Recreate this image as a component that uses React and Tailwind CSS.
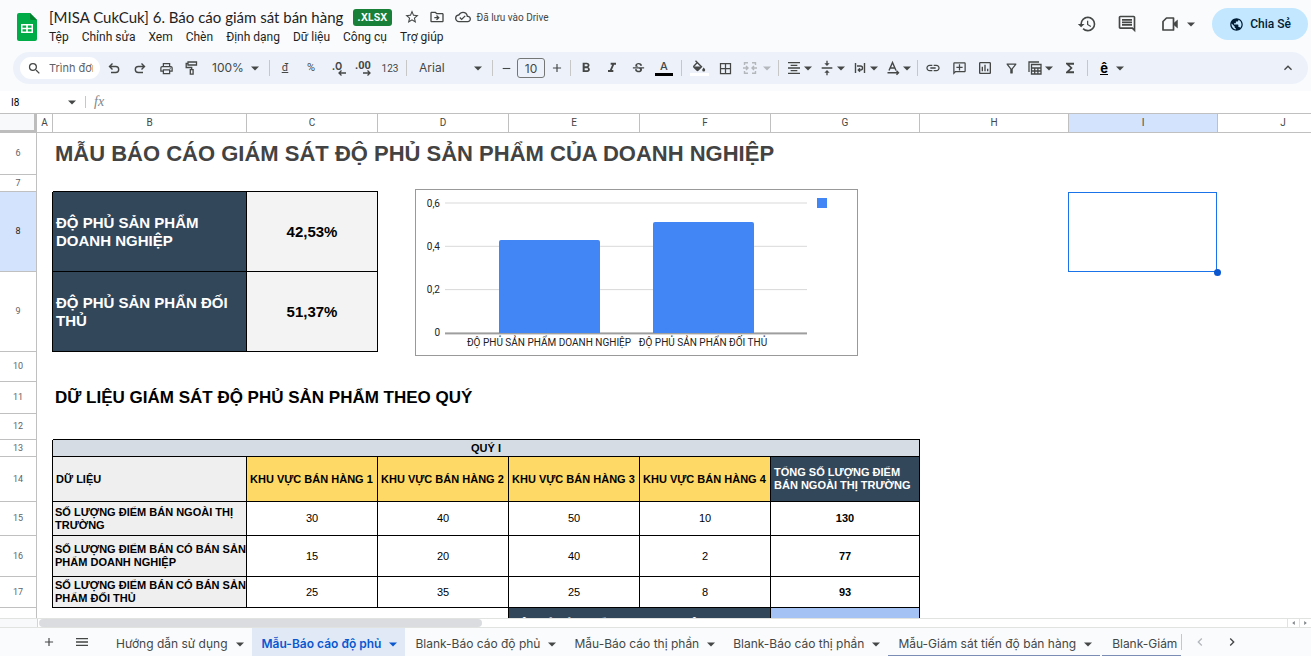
import {
  MdAdd, MdBorderAll, MdChevronLeft, MdChevronRight, MdExpandLess,
  MdFormatAlignCenter, MdFormatBold, MdFormatColorFill, MdFormatItalic, MdFunctions, MdHistory,
  MdLink, MdMenu, MdOutlineAddComment, MdOutlineCloudDone, MdOutlineDriveFileMove,
  MdOutlineFilterAlt, MdOutlineInsertChart, MdOutlineInsertComment, MdOutlinePrint, MdPublic,
  MdRemove, MdSearch, MdStarBorder, MdStrikethroughS, MdVerticalAlignCenter,
} from "react-icons/md"

const MENUS = ["Tệp", "Chỉnh sửa", "Xem", "Chèn", "Định dạng", "Dữ liệu", "Công cụ", "Trợ giúp"]

const COLUMNS = [
  { name: "A", width: "w-[16px]" },
  { name: "B", width: "w-[194px]" },
  { name: "C", width: "w-[131px]" },
  { name: "D", width: "w-[131px]" },
  { name: "E", width: "w-[131px]" },
  { name: "F", width: "w-[131px]" },
  { name: "G", width: "w-[149px]" },
  { name: "H", width: "w-[149px]" },
  { name: "I", width: "w-[149px]" },
  { name: "J", width: "w-[131px]" },
]

const AREAS = ["KHU VỰC BÁN HÀNG 1", "KHU VỰC BÁN HÀNG 2", "KHU VỰC BÁN HÀNG 3", "KHU VỰC BÁN HÀNG 4"]

const DATA = [
  { row: 15, height: "h-[34px]", label: ["SỐ LƯỢNG ĐIỂM BÁN NGOÀI THỊ", "TRƯỜNG"], values: [30, 40, 50, 10], total: 130 },
  { row: 16, height: "h-[41px]", label: ["SỐ LƯỢNG ĐIỂM BÁN CÓ BÁN SẢN", "PHẨM DOANH NGHIỆP"], values: [15, 20, 40, 2], total: 77 },
  { row: 17, height: "h-[31px]", label: ["SỐ LƯỢNG ĐIỂM BÁN CÓ BÁN SẢN", "PHẨM ĐỐI THỦ"], values: [25, 35, 25, 8], total: 93 },
]

const TABS = [
  { name: "Hướng dẫn sử dụng" },
  { name: "Mẫu-Báo cáo độ phủ", active: true },
  { name: "Blank-Báo cáo độ phủ" },
  { name: "Mẫu-Báo cáo thị phần" },
  { name: "Blank-Báo cáo thị phần" },
  { name: "Mẫu-Giám sát tiến độ bán hàng", marked: true },
  { name: "Blank-Giám", marked: true },
]

const cell = "border-r border-b border-black px-[3px]"

function Arrow() {
  return (
    <svg viewBox="0 0 12 12" className="h-3 w-3 shrink-0" fill="currentColor" aria-hidden="true">
      <path d="M2 4.500h8L6 8.500z" />
    </svg>
  )
}

function UndoIcon({ className = "" }) {
  return (
    <svg viewBox="0 0 12 12" className={`h-3 w-3 ${className}`} fill="none" stroke="currentColor" strokeWidth="1.400">
      <path d="M4.500 1.500l-3 3 3 3M1.500 4.500h6.200a3 3 0 0 1 0 6H3" />
    </svg>
  )
}

function Sep({ wide }) {
  return <span className={`h-4 w-px shrink-0 bg-[#c7c7c7] ${wide ? "mx-1" : "mx-[2px]"}`} />
}

function Tool({ label, children, className = "w-[26px]" }) {
  return (
    <button aria-label={label} title={label} className={`flex h-6 shrink-0 items-center justify-center ${className}`}>
      {children}
    </button>
  )
}

function ToolSelect({ label, value, className }) {
  return (
    <span className={`relative flex shrink-0 items-center ${className}`}>
      <select aria-label={label} defaultValue={value} className="w-full appearance-none bg-transparent text-xs outline-none">
        <option>{value}</option>
      </select>
      <span className="pointer-events-none absolute right-1.5">
        <Arrow />
      </span>
    </span>
  )
}

function Header() {
  return (
    <header className="flex h-[52px] items-start justify-between pr-[3px] pt-[7px]">
      <div className="flex">
        {/* Sheets logo */}
        <svg viewBox="0 0 20 28" className="ml-[17px] mt-1.5 h-7 w-5">
          <path d="M2 0h11l7 7v19a2 2 0 0 1-2 2H2a2 2 0 0 1-2-2V2a2 2 0 0 1 2-2z" fill="#00ac47" />
          <path d="M13 0l7 7h-5.500a1.500 1.500 0 0 1-1.500-1.500z" fill="#00832d" />
          <path d="M4 11h12v9H4zM5.500 12.500v2.200h3.700v-2.200zM10.800 12.500v2.200h3.700v-2.200zM5.500 16.300v2.200h3.700v-2.200zM10.800 16.300v2.200h3.700v-2.200z" fill="#fff" fillRule="evenodd" />
        </svg>
        <div className="ml-3">
          <div className="flex h-5 items-center">
            <h1 className="whitespace-nowrap font-[Lato,sans-serif] text-[15px] text-[#1f1f1f]">
              [MISA CukCuk] 6. Báo cáo giám sát bán hàng
            </h1>
            <span className="ml-2.5 rounded-[3px] bg-[#188038] px-1 text-[10px] font-bold leading-[17px] text-white">.XLSX</span>
            <button aria-label="Gắn dấu sao" className="ml-3"><MdStarBorder size={16} /></button>
            <button aria-label="Di chuyển" className="ml-[9px]"><MdOutlineDriveFileMove size={16} /></button>
            <MdOutlineCloudDone size={16} className="ml-2.5" />
            <span className="ml-1.5 font-[Roboto,sans-serif] text-[10px]">Đã lưu vào Drive</span>
          </div>
          <nav className="flex h-5 items-center gap-[13px] font-[Roboto,sans-serif] text-xs text-[#1f1f1f]">
            {MENUS.map((menu) => (
              <button key={menu} className="whitespace-nowrap">{menu}</button>
            ))}
          </nav>
        </div>
      </div>

      <div className="flex h-[34px] shrink-0 items-center">
        <button aria-label="Nhật ký phiên bản"><MdHistory size={20} /></button>
        <button aria-label="Nhận xét" className="ml-5"><MdOutlineInsertComment size={20} /></button>
        <button aria-label="Tham gia cuộc gọi" className="ml-6 flex items-center gap-1.5">
          <svg viewBox="0 0 18 16" className="h-4 w-[18px]" fill="none" stroke="currentColor" strokeWidth="1.700">
            <path d="M5.500 2h7v12H2V5.500z" strokeLinejoin="round" />
            <path d="M12.500 7.500l4-3.500v8l-4-3.500z" fill="currentColor" strokeWidth="0.500" />
          </svg>
          <Arrow />
        </button>
        <button className="ml-[15px] flex h-8 w-24 items-center justify-center gap-1.5 rounded-full bg-[#c2e7ff] font-[Roboto,sans-serif] text-xs font-medium text-[#001d35]">
          <MdPublic size={15} />
          Chia Sẻ
        </button>
      </div>
    </header>
  )
}

function Toolbar() {
  return (
    <div className="ml-[13px] mr-[3px] flex h-8 items-center rounded-full bg-[#edf2fa] pl-[7px] pr-3">
      <label className="mr-px flex h-[22px] w-20 shrink-0 items-center rounded-full bg-white pl-[7px] pr-[7px]">
        <MdSearch size={15} className="shrink-0" />
        <input
          type="text"
          aria-label="Trình đơn"
          placeholder="Trình đơn"
          className="ml-[7px] w-full min-w-0 text-[11px] outline-none placeholder:text-[#5f6368]"
        />
      </label>
      <Tool label="Hủy"><UndoIcon /></Tool>
      <Tool label="Làm lại"><UndoIcon className="-scale-x-100" /></Tool>
      <Tool label="In"><MdOutlinePrint size={15} /></Tool>
      <Tool label="Sao chép định dạng">
        <svg viewBox="0 0 14 14" className="h-3.5 w-3.5" fill="none" stroke="currentColor" strokeWidth="1.300">
          <path d="M3 1h8.500v3H3zM3 2.500H1.200v4h5.500v2M5.300 8.700h2.800v4.500H5.300z" />
        </svg>
      </Tool>
      <ToolSelect label="Thu phóng" value="100%" className="w-[62px] pl-[7px]" />
      <Sep />
      <Tool label="Tiền tệ"><span className="font-[Roboto,sans-serif] text-[11px] underline">đ</span></Tool>
      <Tool label="Phần trăm"><span className="font-[Roboto,sans-serif] text-[11px]">%</span></Tool>
      <Tool label="Giảm số thập phân">
        <span className="relative pb-1 text-[11px] font-semibold leading-3">
          .0
          <svg viewBox="0 0 8 6" className="absolute -right-1 bottom-0 h-1.5 w-2" fill="none" stroke="currentColor" strokeWidth="1.300">
            <path d="M8 3H1M3.500.5L1 3l2.500 2.500" />
          </svg>
        </span>
      </Tool>
      <Tool label="Tăng số thập phân">
        <span className="relative pb-1 font-[Roboto,sans-serif] text-[11px] font-bold leading-3">
          .00
          <svg viewBox="0 0 8 6" className="absolute bottom-0 right-0 h-1.5 w-2" fill="none" stroke="currentColor" strokeWidth="1.300">
            <path d="M0 3h7M4.500.5L7 3 4.500 5.500" />
          </svg>
        </span>
      </Tool>
      <Tool label="Định dạng khác" className="w-7"><span className="font-[Roboto,sans-serif] text-[10px]">123</span></Tool>
      <Sep />
      <ToolSelect label="Phông chữ" value="Arial" className="w-[81px] pl-2.5" />
      <Sep />
      <Tool label="Giảm cỡ chữ" className="w-[22px]"><MdRemove size={13} /></Tool>
      <input
        type="text"
        aria-label="Cỡ chữ"
        defaultValue="10"
        className="h-5 w-7 shrink-0 rounded-[3px] border border-[#747775] text-center text-xs outline-none"
      />
      <Tool label="Tăng cỡ chữ" className="w-[23px]"><MdAdd size={14} /></Tool>
      <Sep />
      <Tool label="Đậm"><MdFormatBold size={16} /></Tool>
      <Tool label="Nghiêng"><MdFormatItalic size={16} /></Tool>
      <Tool label="Gạch ngang"><MdStrikethroughS size={15} /></Tool>
      <Tool label="Màu văn bản">
        <span className="w-[18px] border-b-[3px] border-black text-center text-[11px] font-medium leading-[13px]">A</span>
      </Tool>
      <Sep wide />
      <Tool label="Màu nền">
        <span className="flex w-[19px] justify-center border-b-[3px] border-white">
          {/* tipped bucket without the colour strip of the stock icon */}
          <svg viewBox="0 0 14 13" className="h-[13px] w-3.5" fill="none" stroke="currentColor" strokeWidth="1.400">
            <path d="M3.500 0.800l6 6-3.300 3.300a1 1 0 0 1-1.400 0L2 7.300a1 1 0 0 1 0-1.400l3.300-3.300" />
            <path d="M2 6.500h7.200L5.500 10.200z" fill="currentColor" stroke="none" />
            <path d="M11.700 7.500s1.500 1.500 1.500 2.500a1.500 1.500 0 0 1-3 0c0-1 1.500-2.500 1.500-2.500z" fill="currentColor" stroke="none" />
          </svg>
        </span>
      </Tool>
      <Tool label="Đường viền"><MdBorderAll size={15} /></Tool>
      <Tool label="Hợp nhất ô" className="w-9 pl-1 text-[#b4b7bb]">
        <svg viewBox="0 0 14 14" className="mr-1 h-3.5 w-3.5 shrink-0" fill="none" stroke="currentColor" strokeWidth="1.400">
          <path d="M5 1.700H1.500V4M9 1.700h3.500V4M5 12.300H1.500V10M9 12.300h3.500V10M0 7h5M3 5l2 2-2 2M14 7H9M11 5L9 7l2 2" />
        </svg>
        <Arrow />
      </Tool>
      <Sep wide />
      <Tool label="Căn ngang" className="w-[33px]"><MdFormatAlignCenter size={16} /><Arrow /></Tool>
      <Tool label="Căn dọc" className="w-[33px]"><MdVerticalAlignCenter size={16} /><Arrow /></Tool>
      <Tool label="Xuống dòng" className="w-[33px]">
        <svg viewBox="0 0 16 16" className="h-4 w-4" fill="none" stroke="currentColor" strokeWidth="1.400">
          <path d="M3.500 3v10M12.500 3v10M5 6h3.500a2 2 0 0 1 0 4H6.500M8 8.300L6.300 10 8 11.700" />
        </svg>
        <Arrow />
      </Tool>
      <Tool label="Xoay văn bản" className="w-[33px]">
        <svg viewBox="0 0 16 16" className="h-4 w-4" fill="none" stroke="currentColor" strokeWidth="1.400">
          <path d="M4 10.500L7.500 2.500 11 10.500M5.200 8h4.600M2.500 12.800h11M11.500 10.800l2 2-2 2" />
        </svg>
        <Arrow />
      </Tool>
      <Sep />
      <Tool label="Chèn đường liên kết"><MdLink size={16} /></Tool>
      <Tool label="Chèn nhận xét"><MdOutlineAddComment size={15} className="-scale-x-100" /></Tool>
      <Tool label="Chèn biểu đồ"><MdOutlineInsertChart size={16} /></Tool>
      <Tool label="Tạo bộ lọc"><MdOutlineFilterAlt size={15} /></Tool>
      <Tool label="Chế độ xem bộ lọc" className="w-[33px]">
        <svg viewBox="0 0 16 16" className="h-4 w-4" fill="none" stroke="currentColor" strokeWidth="1.300">
          <path d="M12 2H2v10M4.500 4.500h9.500v9.500H4.500zM4.500 8H14M4.500 11H14M7.700 8v6M10.900 8v6" />
        </svg>
        <Arrow />
      </Tool>
      <Tool label="Hàm"><MdFunctions size={16} /></Tool>
      <Sep wide />
      <Tool label="Công cụ nhập" className="w-[42px] gap-1.5">
        <span className="border-b border-black text-[13px] font-bold leading-3 text-black">ê</span>
        <Arrow />
      </Tool>
      <button aria-label="Ẩn trình đơn" className="ml-auto"><MdExpandLess size={16} /></button>
    </div>
  )
}

function FormulaBar() {
  return (
    <div className="flex h-[23px] items-center border-b border-[#c0c0c0] bg-white">
      <input
        type="text"
        aria-label="Hộp tên"
        defaultValue="I8"
        className="ml-[11px] w-[55px] font-[Roboto,sans-serif] text-[10px] text-black outline-none"
      />
      <button aria-label="Dải ô đã đặt tên"><Arrow /></button>
      <span className="ml-[7px] h-3 w-px bg-[#c7c7c7]" />
      <label htmlFor="formula" className="ml-2 font-['Liberation_Serif',serif] text-sm italic text-[#80868b]">fx</label>
      <input id="formula" type="text" className="ml-2 min-w-0 flex-1 text-xs outline-none" />
    </div>
  )
}

function RowHead({ n, selected }) {
  return (
    <th
      scope="row"
      className={`border-b border-r border-[#c0c0c0] font-[Roboto,sans-serif] text-[9px] font-normal ${selected ? "bg-[#d3e3fd] text-[#1f1f1f]" : "text-[#5f6368]"}`}
    >
      {n}
    </th>
  )
}

function CoverageChart() {
  return (
    <svg
      viewBox="0 0 443 167"
      role="img"
      aria-label="Biểu đồ độ phủ sản phẩm"
      className="absolute left-[415px] top-[75px] h-[167px] w-[443px] bg-white font-[Roboto,sans-serif] text-[10px]"
    >
      <rect x="0.500" y="0.500" width="442" height="166" fill="none" stroke="#999" />
      {["0,6", "0,4", "0,2", "0"].map((tick, i) => (
        <g key={tick}>
          <rect x="30" y={13.5 + i * 43.3} width="362" height={i === 3 ? 2 : 1} fill={i === 3 ? "#9e9e9e" : "#d9d9d9"} />
          <text x="25" y={17.5 + i * 43.3} textAnchor="end" fill="#222">{tick}</text>
        </g>
      ))}
      <path d="M84 144V53a2 2 0 0 1 2-2h97a2 2 0 0 1 2 2v91z" fill="#4285f4" />
      <path d="M238 144V35a2 2 0 0 1 2-2h97a2 2 0 0 1 2 2v109z" fill="#4285f4" />
      <text x="134" y="157" textAnchor="middle" fill="#222">ĐỘ PHỦ SẢN PHẨM DOANH NGHIỆP</text>
      <text x="288" y="157" textAnchor="middle" fill="#222">ĐỘ PHỦ SẢN PHẨN ĐỐI THỦ</text>
      <rect x="402" y="9" width="10" height="10" fill="#4285f4" />
    </svg>
  )
}

function Sheet() {
  return (
    <main className="relative min-h-0 flex-1 overflow-hidden bg-white font-['Liberation_Sans',Arial,sans-serif] text-[11px] leading-[13px] text-black">
      <table className="w-[1349px] table-fixed border-separate border-spacing-0">
        <thead>
          <tr className="h-[19px] font-[Roboto,sans-serif] text-[10px] text-[#444746]">
            <td className="w-[37px] border-b-[3px] border-r-[3px] border-[#bdbdbd] bg-[#f8f9fa]" />
            {COLUMNS.map((col) => (
              <th
                key={col.name}
                scope="col"
                className={`${col.width} border-b border-r border-[#c0c0c0] font-normal leading-4 ${col.name === "I" ? "bg-[#d3e3fd]" : ""}`}
              >
                {col.name}
              </th>
            ))}
          </tr>
        </thead>
        <tbody>
          <tr className="h-[42px]">
            <RowHead n={6} />
            <td />
            <td colSpan={9} className="whitespace-nowrap px-[2px] text-[22px] font-bold leading-7 text-[#434343]">
              MẪU BÁO CÁO GIÁM SÁT ĐỘ PHỦ SẢN PHẨM CỦA DOANH NGHIỆP
            </td>
          </tr>
          <tr className="h-[17px]">
            <RowHead n={7} />
            <td />
            <td colSpan={2} className="border-b border-black" />
          </tr>
          <tr className="h-20">
            <RowHead n={8} selected />
            <td className="border-r border-black" />
            <td className={`${cell} bg-[#33475b] text-[15px] font-bold leading-[18px] text-white`}>ĐỘ PHỦ SẢN PHẨM DOANH NGHIỆP</td>
            <td className={`${cell} bg-[#f3f3f3] text-center text-[15px] font-bold`}>42,53%</td>
            <td colSpan={5} />
            <td className="relative">
              {/* Active cell */}
              <div className="absolute -left-px bottom-0 right-px top-0 border border-[#1a73e8]" />
              <div className="absolute -bottom-1 -right-[3px] h-[7px] w-[7px] rounded-full bg-[#0b57d0]" />
            </td>
          </tr>
          <tr className="h-20">
            <RowHead n={9} />
            <td className="border-r border-black" />
            <td className={`${cell} bg-[#33475b] text-[15px] font-bold leading-[18px] text-white`}>ĐỘ PHỦ SẢN PHẨN ĐỐI THỦ</td>
            <td className={`${cell} bg-[#f3f3f3] text-center text-[15px] font-bold`}>51,37%</td>
          </tr>
          <tr className="h-[30px]">
            <RowHead n={10} />
          </tr>
          <tr className="h-8">
            <RowHead n={11} />
            <td />
            <td colSpan={6} className="whitespace-nowrap px-[2px] text-[17px] font-bold leading-5">
              DỮ LIỆU GIÁM SÁT ĐỘ PHỦ SẢN PHẨM THEO QUÝ
            </td>
          </tr>
          <tr className="h-[26px]">
            <RowHead n={12} />
            <td />
            <td colSpan={6} className="border-b border-black" />
          </tr>
          <tr className="h-[17px]">
            <RowHead n={13} />
            <td className="border-r border-black" />
            <td colSpan={6} className={`${cell} bg-[#d6dce4] text-center font-bold`}>QUÝ I</td>
          </tr>
          <tr className="h-[45px] font-bold">
            <RowHead n={14} />
            <td className="border-r border-black" />
            <td className={`${cell} bg-[#efefef]`}>DỮ LIỆU</td>
            {AREAS.map((area) => (
              <td key={area} className={`${cell} whitespace-nowrap bg-[#ffd966]`}>{area}</td>
            ))}
            <td className={`${cell} bg-[#33475b] text-white`}>TỔNG SỐ LƯỢNG ĐIỂM BÁN NGOÀI THỊ TRƯỜNG</td>
          </tr>
          {DATA.map((item) => (
            <tr key={item.row} className={item.height}>
              <RowHead n={item.row} />
              <td className="border-r border-black" />
              <td className="whitespace-nowrap border-b border-r border-black bg-[#efefef] pl-[2px] font-bold">
                {item.label[0]}
                <br />
                {item.label[1]}
              </td>
              {item.values.map((value, i) => (
                <td key={i} className={`${cell} text-center`}>{value}</td>
              ))}
              <td className={`${cell} text-center font-bold`}>{item.total}</td>
            </tr>
          ))}
          <tr className="h-[31px]">
            <RowHead />
            <td />
            <td colSpan={3} className="border-r border-black" />
            <td colSpan={2} className={`${cell} bg-[#33475b] font-bold text-white`}>ĐỘ PHỦ SẢN PHẨM DOANH NGHIỆP</td>
            <td className={`${cell} bg-[#a4c2f4]`} />
          </tr>
        </tbody>
      </table>
      <CoverageChart />
    </main>
  )
}

function ScrollBar() {
  return (
    <div className="flex h-2.5 shrink-0 border-y border-[#e1e3e1] bg-white">
      <div className="w-[38px] shrink-0 border-r border-[#d5d5d5] bg-[#f8f9fa]" />
      <div className="flex-1">
        <div className="ml-px h-2 w-[35.5%] rounded-full bg-[#dadce0]" />
      </div>
      <button aria-label="Cuộn sang trái" className="flex w-3 items-center justify-center border-l border-[#e1e3e1]">
        <svg viewBox="0 0 4 6" className="h-1 w-[3px]" fill="#80868b"><path d="M4 0v6L0 3z" /></svg>
      </button>
      <button aria-label="Cuộn sang phải" className="flex w-3 items-center justify-center border-l border-[#e1e3e1]">
        <svg viewBox="0 0 4 6" className="h-1 w-[3px]" fill="#80868b"><path d="M0 0v6l4-3z" /></svg>
      </button>
    </div>
  )
}

function SheetTabs() {
  return (
    <footer className="flex h-7 shrink-0 items-center bg-[#f9fbfd] pr-[71px]">
      <button aria-label="Thêm trang tính" className="ml-[42px]"><MdAdd size={14} /></button>
      <button aria-label="Tất cả trang tính" className="ml-[18px] mr-4"><MdMenu size={16} /></button>
      <div className="flex h-full min-w-0 flex-1 overflow-hidden">
        {TABS.map((tab) => (
          <button
            key={tab.name}
            className={`flex shrink-0 items-center gap-1.5 whitespace-nowrap pl-2.5 pr-1.5 pt-1 text-xs ${tab.active ? "bg-[#e1e9f7] font-semibold text-[#0b57d0]" : ""} ${tab.marked ? "mr-0.5 border-b border-[#7c8db5]" : ""}`}
          >
            {tab.name}
            <Arrow />
          </button>
        ))}
      </div>
      <span className="h-4 w-px bg-[#c7c7c7]" />
      <button aria-label="Cuộn trang tính sang trái" className="ml-2.5 text-[#b4b7bb]"><MdChevronLeft size={16} /></button>
      <button aria-label="Cuộn trang tính sang phải" className="ml-4"><MdChevronRight size={16} /></button>
    </footer>
  )
}

export default function App() {
  return (
    <div className="flex h-screen flex-col overflow-hidden bg-[#f9fbfd] font-[Inter,sans-serif] text-[#444746]">
      <div className="shrink-0 pb-[7px]">
        <Header />
        <Toolbar />
      </div>
      <FormulaBar />
      <Sheet />
      <ScrollBar />
      <SheetTabs />
    </div>
  )
}
